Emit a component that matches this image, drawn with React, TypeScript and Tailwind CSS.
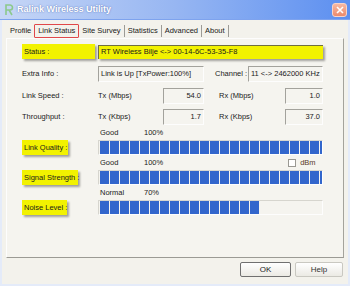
import React from 'react';

function Label({ children, w }: { children: React.ReactNode; w: number }) {
  return (
    <div className="w-[76px] shrink-0">
      <div
        className="h-[15px] bg-[#f2f200] pl-[2px] flex items-center whitespace-nowrap shadow-[2px_2px_2px_rgba(0,0,0,0.35)]"
        style={{ width: w }}
      >
        {children}
      </div>
    </div>
  );
}

function Field({ children, w, right }: { children: React.ReactNode; w: number; right?: boolean }) {
  return (
    <div
      className={`h-[16px] whitespace-nowrap border border-t-[#a3a29c] border-l-[#a3a29c] border-b-[#fdfdfd] border-r-[#fdfdfd] flex items-center px-[2px] ${right ? 'justify-end' : ''}`}
      style={{ width: w }}
    >
      {children}
    </div>
  );
}

function Bar({ pct }: { pct: number }) {
  const n = Math.round((pct / 100) * 23);
  return (
    <div className="w-[225px] h-[15px] border border-t-[#d6d5ce] border-l-[#d6d5ce] border-b-[#fdfdfd] border-r-[#fdfdfd] flex items-center pl-[1px] gap-[1px] overflow-hidden">
      {Array.from({ length: n }).map((_, i) => (
        <div key={i} className="w-[9px] h-[13px] shrink-0 bg-[#3266cc]" />
      ))}
    </div>
  );
}

function Tab({ children, sep = true }: { children: React.ReactNode; sep?: boolean }) {
  return (
    <div className="flex items-center">
      <span className="px-[3px]">{children}</span>
      {sep && <div className="w-[1px] h-[12px] bg-[#9c9b96]" />}
    </div>
  );
}

export default function App() {
  return (
    <div className="w-[350px] h-[286px] overflow-hidden bg-white font-['Liberation_Sans',Arial,sans-serif] text-[7.5px] text-[#1a1a1a] whitespace-nowrap">
      <div className="h-[20px] bg-gradient-to-r from-[#c6d6f6] via-[#97b6f2] to-[#5c8ff0] flex items-center pl-[4px] pr-[3px] border-b border-[#7ea3ee]">
        <svg width="10" height="13" viewBox="0 0 10 13" className="mr-[3px]">
          <path d="M2 12V2h4a2.5 2.5 0 0 1 0 5H2M5 7l3 5" fill="none" stroke="#8cc98c" strokeWidth="1.6" />
        </svg>
        <span className="text-white font-bold text-[9px] [text-shadow:0_0_1.5px_rgba(40,70,150,0.8)]">
          Ralink Wireless Utility
        </span>
        <div className="ml-auto w-[15px] h-[14px] rounded-[3px] bg-gradient-to-b from-[#f7b8a2] to-[#ec8a6c] border border-[#fad3c6] flex items-center justify-center">
          <svg width="8" height="8" viewBox="0 0 8 8">
            <path d="M1 1l6 6M7 1l-6 6" stroke="white" strokeWidth="1.6" />
          </svg>
        </div>
      </div>

      <div className="h-[266px] bg-[#f3f2ec] border-x-[2px] border-b-[2px] border-[#e4ebf9] flex flex-col">
        <div className="h-[18px] flex items-center pl-[8px] pt-[3px]">
          <span className="mr-[3px]">Profile</span>
          <div className="w-[45px] h-[14px] border border-[#e0484a] rounded-[1px] flex items-center justify-center">
            Link Status
          </div>
          <Tab>Site Survey</Tab>
          <Tab>Statistics</Tab>
          <Tab>Advanced</Tab>
          <Tab>About</Tab>
        </div>

        <div className="mx-[4px] h-[220px] bg-[#f5f4ef] border border-t-[#fdfdfd] border-l-[#fdfdfd] border-r-[#a4a39c] border-b-[#9b9a94] pl-[15px] pt-[5px] flex flex-col">
          <div className="flex items-center h-[15px]">
            <Label w={73}>Status :</Label>
            <div className="w-[225px] h-[14px] bg-[#f2f200] border-l border-t border-[#6f6f40] pl-[2px] flex items-center shadow-[2px_2px_2px_rgba(0,0,0,0.35)]">
              RT Wireless Bilje &lt;-&gt; 00-14-6C-53-35-F8
            </div>
          </div>

          <div className="flex items-center mt-[7px] h-[16px]">
            <div className="w-[76px]">Extra Info :</div>
            <Field w={106}>Link is Up [TxPower:100%]</Field>
            <div className="w-[44px] pl-[11px]">Channel :</div>
            <Field w={75}>11 &lt;-&gt; 2462000 KHz</Field>
          </div>

          <div className="flex items-center mt-[6px] h-[16px]">
            <div className="w-[76px]">Link Speed :</div>
            <div className="w-[65px]">Tx (Mbps)</div>
            <Field w={41} right>54.0</Field>
            <div className="w-[81px] pl-[15px]">Rx (Mbps)</div>
            <Field w={38} right>1.0</Field>
          </div>

          <div className="flex items-center mt-[5px] h-[16px]">
            <div className="w-[76px]">Throughput :</div>
            <div className="w-[65px]">Tx (Kbps)</div>
            <Field w={41} right>1.7</Field>
            <div className="w-[81px] pl-[15px]">Rx (Kbps)</div>
            <Field w={38} right>37.0</Field>
          </div>

          <div className="flex items-center h-[11px] pl-[78px] mt-[2px]">
            <span className="w-[44px]">Good</span>
            <span>100%</span>
          </div>
          <div className="flex items-center h-[15px] mt-[2px]">
            <Label w={46}>Link Quality :</Label>
            <Bar pct={100} />
          </div>

          <div className="flex items-center h-[13px] pl-[78px] mt-[1px]">
            <span className="w-[44px]">Good</span>
            <span>100%</span>
            <div className="ml-[125px] w-[8px] h-[8px] bg-white border border-[#9a9993]" />
            <span className="ml-[4px] text-[#5a3a2a]">dBm</span>
          </div>
          <div className="flex items-center h-[15px] mt-[1px]">
            <Label w={56}>Signal Strength :</Label>
            <Bar pct={100} />
          </div>

          <div className="flex items-center h-[13px] pl-[78px] mt-[1px]">
            <span className="w-[44px]">Normal</span>
            <span>70%</span>
          </div>
          <div className="flex items-center h-[15px] mt-[1px]">
            <Label w={45}>Noise Level :</Label>
            <Bar pct={70} />
          </div>
        </div>

        <div className="flex justify-end gap-[4px] pr-[5px] mt-[4px]">
          <div className="w-[51px] h-[15px] border border-[#707070] rounded-[2px] bg-gradient-to-b from-white to-[#ebeae4] flex items-center justify-center text-[8px]">
            OK
          </div>
          <div className="w-[48px] h-[15px] border border-[#c9c8c1] rounded-[2px] bg-gradient-to-b from-white to-[#ebeae4] flex items-center justify-center text-[8px] text-[#333]">
            Help
          </div>
        </div>
      </div>
    </div>
  );
}
